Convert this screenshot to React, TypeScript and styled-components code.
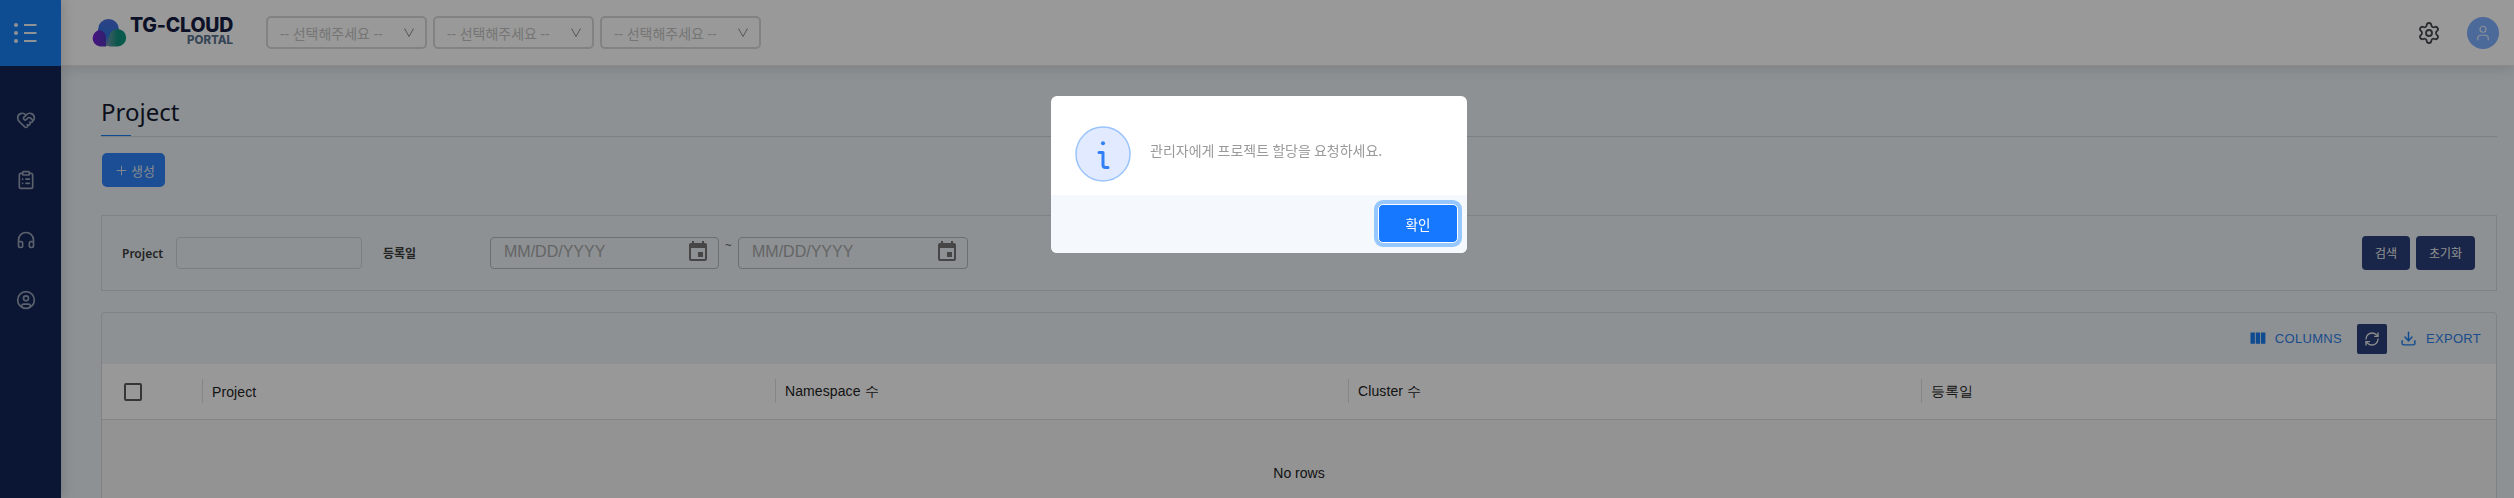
import styled, { createGlobalStyle } from "styled-components";
import {
  HeartHandshake,
  ClipboardList,
  Headphones,
  CircleUser,
  Settings,
  User,
  Plus,
  RefreshCw,
  Download,
} from "lucide-react";

const GlobalStyle = createGlobalStyle`
  html, body {
    margin: 0;
    padding: 0;
    height: 100%;
    overflow: hidden;
    background: #ebf2f7;
  }
  * {
    box-sizing: border-box;
  }
  body {
    font-family: "Noto Sans", "Noto Sans CJK KR", sans-serif;
  }
`;

const Page = styled.div`
  display: flex;
  width: 2514px;
  height: 498px;
  overflow: hidden;
`;

const Sidebar = styled.aside`
  flex: none;
  width: 61px;
  background: #122655;
  display: flex;
  flex-direction: column;
  align-items: center;
  box-shadow: 2px 0 12px rgba(0, 0, 0, 0.15);
  z-index: 2;
`;

const MenuBlock = styled.div`
  width: 100%;
  height: 66px;
  background: #1980f3;
  display: flex;
  align-items: center;
  padding-left: 12px;
  margin-bottom: 24px;
`;

const SideItem = styled.div`
  height: 60px;
  width: 100%;
  display: flex;
  align-items: center;
  justify-content: center;
  padding-right: 9px;
  color: #98a0b6;
`;

const Main = styled.div`
  flex: 1;
  min-width: 0;
  display: flex;
  flex-direction: column;
`;

const Header = styled.header`
  height: 66px;
  flex: none;
  background: #fff;
  display: flex;
  align-items: center;
  padding: 0 15px 0 30px;
  box-shadow: 0 2px 14px rgba(0, 0, 0, 0.12);
  border-bottom: 1px solid #e8e8e8;
  z-index: 1;
`;

const Logo = styled.div`
  display: flex;
  align-items: flex-start;
  gap: 3px;
  width: 175px;
  flex: none;
`;

const LogoText = styled.div`
  display: flex;
  flex-direction: column;
  align-items: flex-end;
  margin-top: -4px;
  font-family: Inter, sans-serif;
  font-weight: 800;
`;

const LogoTitle = styled.span`
  font-size: 19.5px;
  line-height: 20px;
  color: #141d44;
  letter-spacing: -0.2px;
`;

const LogoSub = styled.span`
  font-size: 11.5px;
  line-height: 11px;
  color: #5b7390;
`;

const Selects = styled.div`
  display: flex;
  gap: 6px;
`;

const SelectBox = styled.div`
  width: 161px;
  height: 33px;
  border: 2px solid #d9d9d9;
  border-radius: 5px;
  display: flex;
  align-items: center;
  justify-content: space-between;
  padding: 0 11px 0 12px;
  font-size: 14px;
  color: #c4c4c4;
`;

const HeaderRight = styled.div`
  margin-left: auto;
  display: flex;
  align-items: center;
  gap: 26px;
  color: #46494f;
`;

const Avatar = styled.div`
  width: 32px;
  height: 32px;
  border-radius: 50%;
  background: #7eafff;
  color: #e6eeff;
  display: flex;
  align-items: center;
  justify-content: center;
`;

const Content = styled.main`
  flex: 1;
  padding: 30px 17px 0 40px;
  background: #ebf2f7;
`;

const TitleRow = styled.div`
  height: 41px;
  border-bottom: 1px solid #d0d4d8;
  display: flex;
  flex-direction: column;
  justify-content: flex-end;
`;

const Title = styled.h1`
  margin: 0 0 7px 0;
  font-size: 24px;
  line-height: 32px;
  font-weight: 400;
  color: #141a30;
`;

const TitleAccent = styled.div`
  width: 30px;
  height: 3px;
  background: #1a7ef0;
`;

const AddButton = styled.button`
  display: flex;
  align-items: center;
  gap: 2px;
  height: 34px;
  width: 63px;
  margin: 16px 0 0 1px;
  padding: 0 0 0 12px;
  border: 0;
  border-radius: 5px;
  background: #2e82f8;
  color: #dfe4ee;
  font-family: inherit;
  font-size: 13px;
`;

const FilterPanel = styled.section`
  margin-top: 28px;
  height: 76px;
  border: 1px solid #d4dade;
  display: flex;
  align-items: center;
  padding: 0 21px 0 20px;
`;

const FilterLabel = styled.label<{ $width: number }>`
  flex: none;
  width: ${({ $width }) => $width}px;
  font-size: 12px;
  font-weight: 600;
  color: #3c3c3c;
`;

const TextInput = styled.div`
  flex: none;
  width: 186px;
  height: 32px;
  margin-right: 21px;
  border: 1px solid #cfd4d8;
  border-radius: 4px;
`;

const DateField = styled.div<{ $width: number }>`
  flex: none;
  width: ${({ $width }) => $width}px;
  height: 32px;
  border: 1px solid #b4b8bc;
  border-radius: 4px;
  display: flex;
  align-items: center;
  justify-content: space-between;
  padding: 0 8px 3px 13px;
  font-family: "Liberation Sans", Arial, sans-serif;
  font-size: 16px;
  color: #a8a8a8;
`;

const Tilde = styled.span`
  flex: none;
  width: 19px;
  text-align: center;
  font-size: 12px;
  line-height: 12px;
  margin-bottom: 14px;
  color: #666;
`;

const FilterActions = styled.div`
  margin-left: auto;
  display: flex;
  gap: 6px;
`;

const DarkButton = styled.button<{ $width: number }>`
  width: ${({ $width }) => $width}px;
  height: 34px;
  border: 0;
  border-radius: 4px;
  background: #2a3f7b;
  color: #f0f0f0;
  font-family: inherit;
  font-size: 12px;
  padding: 0;
`;

const TablePanel = styled.section`
  margin-top: 21px;
  border: 1px solid #d4dade;
  border-bottom: 0;
  border-radius: 4px 4px 0 0;
`;

const Toolbar = styled.div`
  height: 51px;
  display: flex;
  align-items: center;
  justify-content: flex-end;
  padding-right: 15px;
`;

const ToolLink = styled.div<{ $gap: number }>`
  display: flex;
  align-items: center;
  gap: ${({ $gap }) => $gap}px;
  font-family: "Liberation Sans", Arial, sans-serif;
  font-size: 13px;
  letter-spacing: 0.3px;
  color: #2f7fe8;
`;

const RefreshButton = styled.div`
  width: 30px;
  height: 30px;
  margin: 0 13px 0 15px;
  border-radius: 2px;
  background: #2a3f7b;
  color: #e8e8e8;
  display: flex;
  align-items: center;
  justify-content: center;
`;

const HeaderGrid = styled.div`
  display: grid;
  grid-template-columns: 100px repeat(3, 573px) 1fr;
  height: 56px;
  background: #fefefe;
  border-bottom: 1px solid #dcdcdc;
  font-family: "Liberation Sans", Arial, sans-serif;
  font-size: 14px;
  letter-spacing: 0.1px;
  color: #222;
`;

const CheckCell = styled.div`
  display: flex;
  align-items: center;
  padding-left: 22px;
`;

const Checkbox = styled.div`
  width: 18px;
  height: 18px;
  border: 2px solid #5a5a5a;
  border-radius: 2px;
`;

const ColumnCell = styled.div`
  display: flex;
  align-items: center;
  padding-left: 10px;
  position: relative;

  &::before {
    content: "";
    position: absolute;
    left: 0;
    top: 15px;
    bottom: 16px;
    width: 1px;
    background: #e0e0e0;
  }
`;

const Body = styled.div`
  height: 106px;
  background: #f5f5f5;
  display: flex;
  align-items: center;
  justify-content: center;
  font-family: "Liberation Sans", Arial, sans-serif;
  font-size: 14px;
  color: #222;
`;

const Backdrop = styled.div`
  position: fixed;
  inset: 0;
  background: rgba(0, 0, 0, 0.4);
  z-index: 10;
  display: flex;
  justify-content: center;
  padding: 96px 0 0 4px;
`;

const Modal = styled.div`
  width: 416px;
  height: 157px;
  background: #fff;
  border-radius: 6px;
  overflow: hidden;
  display: flex;
  flex-direction: column;
`;

const ModalBody = styled.div`
  height: 99px;
  display: flex;
  align-items: center;
  gap: 19px;
  padding: 17px 0 0 24px;
  font-size: 14px;
  font-family: "Noto Sans CJK KR", sans-serif;
  font-weight: 400;
  color: #9a9a9a;
`;

const ModalText = styled.span`
  margin-top: -9px;
`;

const ModalFooter = styled.div`
  height: 58px;
  background: #f5f8fd;
  display: flex;
  justify-content: flex-end;
  padding: 9px 9px 0 0;
`;

const ConfirmButton = styled.button`
  width: 80px;
  height: 39px;
  background: #1677ff;
  border: 1px solid #fff;
  border-radius: 5px;
  box-shadow: 0 0 0 4px #96c8ff;
  color: #fff;
  font-family: "Noto Sans CJK KR", sans-serif;
  font-size: 13.5px;
  padding: 0;
`;

const MenuIcon = () => (
  <svg width="26" height="20" viewBox="0 0 26 20" fill="none">
    <circle cx="4" cy="2" r="2" fill="#f2f4f8" />
    <circle cx="4" cy="10" r="2" fill="#f2f4f8" />
    <circle cx="4" cy="18" r="2" fill="#f2f4f8" />
    <path d="M12 2h12.500M12 10h12.500M12 18h12.500" stroke="#f2f4f8" strokeWidth="2" />
  </svg>
);

const CloudLogo = () => (
  <svg width="36" height="28" viewBox="0 0 36 28" fill="none">
    <defs>
      <linearGradient id="lgBlue" x1="0" y1="0" x2="0" y2="1">
        <stop offset="0" stopColor="#4a6fe0" />
        <stop offset="0.6" stopColor="#2f74e0" />
        <stop offset="1" stopColor="#7f8fa8" />
      </linearGradient>
      <linearGradient id="lgPurple" x1="0" y1="0" x2="1" y2="0">
        <stop offset="0" stopColor="#7a20d8" />
        <stop offset="1" stopColor="#5038b8" />
      </linearGradient>
      <linearGradient id="lgTeal" x1="0" y1="0" x2="1" y2="0">
        <stop offset="0" stopColor="#5d9aa0" />
        <stop offset="0.5" stopColor="#12907f" />
        <stop offset="1" stopColor="#0f9c80" />
      </linearGradient>
    </defs>
    <path d="M17.500 0a10.500 10.500 0 0 1 10.500 10.500V27H7V10.500A10.500 10.500 0 0 1 17.500 0z" fill="url(#lgBlue)" />
    <path d="M9 11a8.300 8.300 0 0 0 0 16.500h6V19a8.300 8.300 0 0 0-6-8z" fill="url(#lgPurple)" />
    <path d="M26.500 10a8.700 8.700 0 0 1 0 17.400H18V18.700A8.700 8.700 0 0 1 26.500 10z" fill="url(#lgTeal)" />
  </svg>
);

const SelectChevron = () => (
  <svg width="10" height="9" viewBox="0 0 10 9" fill="none">
    <path d="M.5.5 5 8.500 9.500.5" stroke="#8f8f8f" strokeWidth="1" />
  </svg>
);

const InfoIcon = () => (
  <svg width="56" height="56" viewBox="0 0 56 56" fill="none">
    <circle cx="28" cy="28" r="27" fill="#e1eaff" stroke="#9ac4fb" strokeWidth="1.500" />
    <circle cx="28" cy="17.300" r="2" fill="#307ff5" />
    <path d="M24 26.500h4V39q0 2.500 2.500 2.500H33" stroke="#307ff5" strokeWidth="3" strokeLinecap="round" strokeLinejoin="round" />
  </svg>
);

const CalendarIcon = () => (
  <svg width="24" height="24" viewBox="0 0 24 24" fill="#757575">
    <path d="M17 12h-5v5h5v-5zM16 1v2H8V1H6v2H5c-1.110 0-1.990.9-1.990 2L3 19c0 1.100.89 2 2 2h14c1.100 0 2-.9 2-2V5c0-1.100-.9-2-2-2h-1V1h-2zm3 18H5V8h14v11z" />
  </svg>
);

const ColumnsIcon = () => (
  <svg width="21" height="21" viewBox="0 0 24 24" fill="#1a7ef0">
    <path d="M10 18h5V5h-5v13zm-6 0h5V5H4v13zM16 5v13h5V5h-5z" />
  </svg>
);

const columns = ["Project", "Namespace 수", "Cluster 수", "등록일"];

export default function App() {
  return (
    <>
      <GlobalStyle />
      <Page>
        <Sidebar>
          <MenuBlock>
            <MenuIcon />
          </MenuBlock>
          <SideItem>
            <HeartHandshake size={20} />
          </SideItem>
          <SideItem>
            <ClipboardList size={20} />
          </SideItem>
          <SideItem>
            <Headphones size={20} />
          </SideItem>
          <SideItem>
            <CircleUser size={20} />
          </SideItem>
        </Sidebar>
        <Main>
          <Header>
            <Logo>
              <CloudLogo />
              <LogoText>
                <LogoTitle>TG-CLOUD</LogoTitle>
                <LogoSub>PORTAL</LogoSub>
              </LogoText>
            </Logo>
            <Selects>
              {[0, 1, 2].map((i) => (
                <SelectBox key={i}>
                  -- 선택해주세요 --
                  <SelectChevron />
                </SelectBox>
              ))}
            </Selects>
            <HeaderRight>
              <Settings size={24} strokeWidth={1.8} />
              <Avatar>
                <User size={18} strokeWidth={1.6} />
              </Avatar>
            </HeaderRight>
          </Header>
          <Content>
            <TitleRow>
              <Title>Project</Title>
              <TitleAccent />
            </TitleRow>
            <AddButton>
              <Plus size={15} strokeWidth={1.5} />
              생성
            </AddButton>
            <FilterPanel>
              <FilterLabel $width={54}>Project</FilterLabel>
              <TextInput />
              <FilterLabel $width={107}>등록일</FilterLabel>
              <DateField $width={229}>
                MM/DD/YYYY
                <CalendarIcon />
              </DateField>
              <Tilde>~</Tilde>
              <DateField $width={230}>
                MM/DD/YYYY
                <CalendarIcon />
              </DateField>
              <FilterActions>
                <DarkButton $width={48}>검색</DarkButton>
                <DarkButton $width={59}>초기화</DarkButton>
              </FilterActions>
            </FilterPanel>
            <TablePanel>
              <Toolbar>
                <ToolLink $gap={7}>
                  <ColumnsIcon />
                  COLUMNS
                </ToolLink>
                <RefreshButton>
                  <RefreshCw size={16} />
                </RefreshButton>
                <ToolLink $gap={9}>
                  <Download size={17} color="#1a7ef0" />
                  EXPORT
                </ToolLink>
              </Toolbar>
              <HeaderGrid>
                <CheckCell>
                  <Checkbox />
                </CheckCell>
                {columns.map((c) => (
                  <ColumnCell key={c}>{c}</ColumnCell>
                ))}
              </HeaderGrid>
              <Body>No rows</Body>
            </TablePanel>
          </Content>
        </Main>
      </Page>
      <Backdrop>
        <Modal>
          <ModalBody>
            <InfoIcon />
            <ModalText>관리자에게 프로젝트 할당을 요청하세요.</ModalText>
          </ModalBody>
          <ModalFooter>
            <ConfirmButton>확인</ConfirmButton>
          </ModalFooter>
        </Modal>
      </Backdrop>
    </>
  );
}
